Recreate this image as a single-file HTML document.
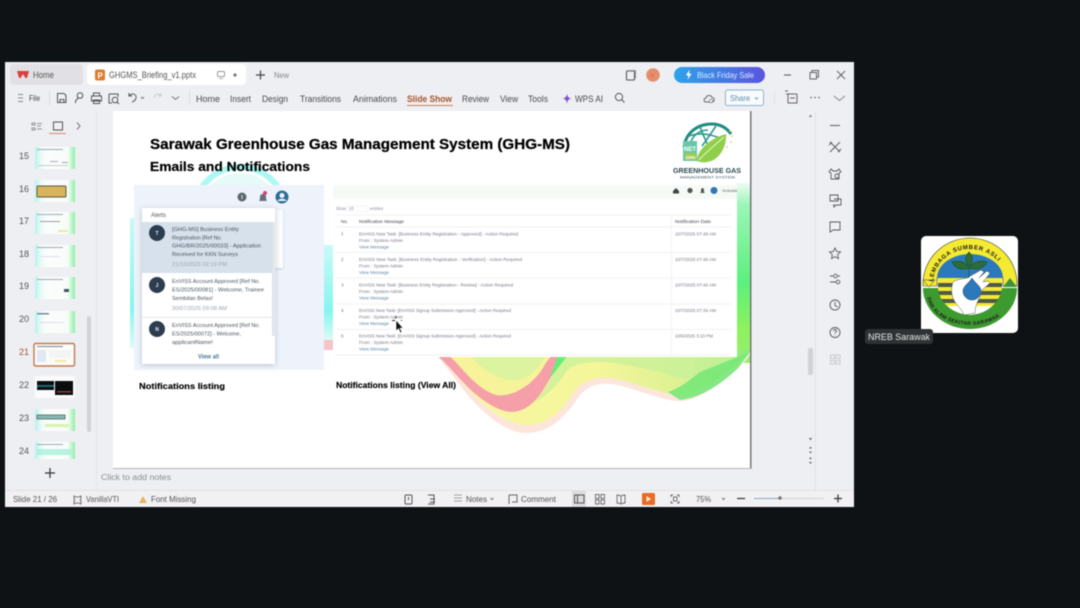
<!DOCTYPE html>
<html><head><meta charset="utf-8"><title>GHGMS Briefing</title>
<style>
html,body{margin:0;padding:0;width:1080px;height:608px;overflow:hidden;background:#0f1214}
svg{display:block;position:absolute;left:0;top:0;font-family:"Liberation Sans",sans-serif}
</style></head><body>
<svg width="1080" height="608" viewBox="0 0 1080 608" xmlns="http://www.w3.org/2000/svg">
<defs>
<linearGradient id="bf" x1="0" x2="1" y1="0" y2="0"><stop offset="0" stop-color="#2da3ea"/><stop offset="1" stop-color="#5b55de"/></linearGradient>
<linearGradient id="gr" x1="0" x2="0" y1="0" y2="1"><stop offset="0" stop-color="#eefcf3"/><stop offset=".12" stop-color="#9cf6b8"/><stop offset=".55" stop-color="#5cf07e"/><stop offset=".8" stop-color="#8cf25e"/><stop offset="1" stop-color="#9bee70"/></linearGradient>
<linearGradient id="cy" x1="0" x2="0" y1="0" y2="1"><stop offset="0" stop-color="#c8faf6"/><stop offset=".7" stop-color="#86f5ef"/><stop offset="1" stop-color="#e0fbf6"/></linearGradient>
<linearGradient id="sw" x1="0" x2="1" y1="0" y2="0"><stop offset="0" stop-color="#f9f6a6"/><stop offset=".5" stop-color="#f5f69a"/><stop offset=".8" stop-color="#d9f193"/><stop offset="1" stop-color="#7ced76"/></linearGradient>
<linearGradient id="th" x1="0" x2="1" y1="0" y2="0"><stop offset="0" stop-color="#b4f2ee"/><stop offset=".16" stop-color="#eefaf8"/><stop offset=".3" stop-color="#fbfdfc"/><stop offset=".82" stop-color="#f8fcf8"/><stop offset="1" stop-color="#8ef0a6"/></linearGradient>
<path id="arcT" d="M933 284A37 35 0 0 1 1007 284"/>
<path id="arcB" d="M927 294A43 31 0 0 0 1013 294"/>
<clipPath id="sc"><rect x="113" y="111" width="637" height="357"/></clipPath>
<clipPath id="nc"><rect x="921" y="236" width="97" height="97" rx="5"/></clipPath>
</defs>
<g style="filter:blur(.5px)">
<!-- window -->
<rect x="5" y="62" width="849" height="445" fill="#eeeff3"/>
<rect x="10" y="64" width="73" height="21" rx="4" fill="#e1e1e5"/>
<rect x="87" y="64" width="159" height="21" rx="4" fill="#fff"/>
<path d="M17 71h12l-2 7h-1.600l-2.400-4-2.400 4H19z" fill="#d8413c"/>
<text x="33" y="78" font-size="9" fill="#555" textLength="21" lengthAdjust="spacingAndGlyphs">Home</text>
<rect x="95" y="69.500" width="10" height="11" rx="2" fill="#e07b2e"/><text x="97.500" y="78.500" font-size="8" fill="#fff" font-weight="bold">P</text>
<text x="109" y="78" font-size="9" fill="#555" textLength="87" lengthAdjust="spacingAndGlyphs">GHGMS_Briefing_v1.pptx</text>
<rect x="217.500" y="71.500" width="7" height="5" rx="1" fill="none" stroke="#999"/><path d="M219 78.500h4" stroke="#aaa"/>
<circle cx="235" cy="75" r="1.600" fill="#777"/>
<path d="M256 75h9M260.500 70.500v9" stroke="#444" stroke-width="1.200"/>
<text x="274" y="78" font-size="8" fill="#888" textLength="15" lengthAdjust="spacingAndGlyphs">New</text>
<!-- top right -->
<rect x="626.500" y="71" width="8" height="9" rx="1" fill="none" stroke="#555" stroke-width="1.100"/><path d="M628 70.500h7.500v8" fill="none" stroke="#999"/>
<circle cx="653" cy="75" r="6.800" fill="#e58f6a"/><text x="650" y="77.500" font-size="6" fill="#d8704c">N</text>
<rect x="674" y="67" width="91" height="16" rx="8" fill="url(#bf)"/>
<path d="M689.500 69.500l-3.500 6h2.500l-1 4.500 4-6.200h-2.500z" fill="#fff"/>
<text x="697" y="78" font-size="8.500" fill="#d8ecff" textLength="57" lengthAdjust="spacingAndGlyphs">Black Friday Sale</text>
<path d="M784 75h7" stroke="#555"/>
<rect x="810" y="72.500" width="6.500" height="6.500" fill="none" stroke="#666"/><path d="M812 72.500v-2h6.500v6.500h-2" fill="none" stroke="#666"/>
<path d="M837 71l8 8M845 71l-8 8" stroke="#666"/>
<!-- quick toolbar -->
<path d="M18 94.500h5M18 98h5M18 101.500h5" stroke="#888"/>
<text x="29" y="101" font-size="8.500" fill="#444" textLength="11" lengthAdjust="spacingAndGlyphs">File</text>
<path d="M49.500 91v14" stroke="#ddd"/>
<path d="M57.500 93.500h6.500l2 2v7h-8.500zM60 102.500v-3h4v3" fill="none" stroke="#555"/>
<circle cx="80" cy="95.500" r="2.800" fill="none" stroke="#555"/><path d="M78 98l-2.500 3v2" fill="none" stroke="#555"/>
<path d="M93.500 96v-3h6v3M91.500 96h10v5h-10zM93.500 100h6v3.500h-6z" fill="none" stroke="#555"/>
<path d="M109 94h9v3M109 94v9h3" fill="none" stroke="#555"/><circle cx="115" cy="100" r="2.800" fill="none" stroke="#555"/><path d="M117 102l2 2" stroke="#555"/>
<path d="M129 96c3-3.500 8-2 7 2-.5 2-2 3.500-4 4M129 93v3h3" fill="none" stroke="#555"/><path d="M141 97l1.500 1.500L144 97" fill="none" stroke="#777"/>
<path d="M161 96c-3-3.500-7-2-6.500 2M161 93v3h-3" fill="none" stroke="#ccc"/>
<path d="M172 96.500l3.500 3 3.500-3" fill="none" stroke="#777"/>
<path d="M189.500 91v14" stroke="#ddd"/>
<!-- menu -->
<g font-size="9" fill="#4a4a4a">
<text x="196" y="102" textLength="24" lengthAdjust="spacingAndGlyphs">Home</text>
<text x="230" y="102" textLength="21" lengthAdjust="spacingAndGlyphs">Insert</text>
<text x="262" y="102" textLength="26" lengthAdjust="spacingAndGlyphs">Design</text>
<text x="300" y="102" textLength="41" lengthAdjust="spacingAndGlyphs">Transitions</text>
<text x="353" y="102" textLength="44" lengthAdjust="spacingAndGlyphs">Animations</text>
<text x="407" y="102" textLength="45" lengthAdjust="spacingAndGlyphs" fill="#a4562a" font-weight="bold">Slide Show</text>
<text x="462" y="102" textLength="27" lengthAdjust="spacingAndGlyphs">Review</text>
<text x="500" y="102" textLength="18" lengthAdjust="spacingAndGlyphs">View</text>
<text x="528" y="102" textLength="20" lengthAdjust="spacingAndGlyphs">Tools</text>
<text x="575" y="102" textLength="28" lengthAdjust="spacingAndGlyphs">WPS AI</text>
</g>
<rect x="407" y="105" width="46" height="1" fill="#c9825a"/>
<path d="M562.500 98.500c3-.5 4-1.500 4.500-5 .5 3.500 1.500 4.500 4.500 5-3 .5-4 1.500-4.500 5.500-.5-4-1.500-5-4.500-5.500z" fill="#7a4fd0"/>
<circle cx="619" cy="97" r="3.600" fill="none" stroke="#555"/><path d="M621.500 99.500l3 3" stroke="#555"/>
<path d="M706 102h6c3 0 3-4.500 0-4.500-1-3-5.500-2.500-6 .5-2.500.5-2.500 4 0 4z" fill="none" stroke="#666"/><circle cx="711" cy="101" r="1.800" fill="#eeeff3" stroke="#666" stroke-width=".7"/>
<rect x="725.500" y="90" width="38" height="15.500" rx="2" fill="#f8fafc" stroke="#8db4cc"/>
<text x="730" y="101" font-size="8.500" fill="#5c8cab" textLength="20" lengthAdjust="spacingAndGlyphs">Share</text><path d="M755 97.500l1.500 1.500 1.500-1.500" fill="none" stroke="#7aa"/>
<path d="M774.500 91v14" stroke="#e2e2e5"/>
<path d="M786 94h11M788 94v9h9v-9M790 98h5M785 91h3" fill="none" stroke="#666"/>
<circle cx="811" cy="97.500" r=".8" fill="#555"/><circle cx="815" cy="97.500" r=".8" fill="#555"/><circle cx="819" cy="97.500" r=".8" fill="#555"/>
<path d="M834 96l5.500 4.500L845 96" fill="none" stroke="#888"/>
<!-- left rail -->
<path d="M32 123h3v2h-3zM32 128h3v2h-3zM37 123.500h5M37 126h4M37 129h5" fill="none" stroke="#777" stroke-width=".8"/>
<rect x="53.500" y="122" width="9" height="8" fill="none" stroke="#555"/><rect x="49" y="133" width="17" height="1" fill="#d08a66"/>
<path d="M77 122.500l3 3.500-3 3.500" fill="none" stroke="#777"/>
<path d="M96.500 111v380" stroke="#e6e6ea"/>
<!-- thumbnails -->
<g font-size="9" fill="#555" text-anchor="middle">
<text x="24" y="159">15</text><text x="24" y="192">16</text><text x="24" y="224">17</text><text x="24" y="257">18</text><text x="24" y="289">19</text><text x="24" y="322">20</text><text x="24" y="355" fill="#a4562a">21</text><text x="24" y="388">22</text><text x="24" y="421">23</text><text x="24" y="454">24</text>
</g>
<g>
<rect x="35" y="147" width="40" height="22" fill="url(#th)"/><rect x="37" y="149" width="26" height="1" fill="#9ab"/><rect x="38" y="165" width="30" height="1" fill="#ccc"/><rect x="50" y="161" width="8" height="1" fill="#aab"/><rect x="62" y="162" width="6" height="1" fill="#9ab"/>
<rect x="35" y="180" width="40" height="22" fill="url(#th)"/><rect x="37" y="186" width="29" height="11" rx="1" fill="#d8b45a" stroke="#5c5a45"/>
<rect x="35" y="212" width="40" height="22" fill="url(#th)"/><rect x="37" y="214" width="26" height="1" fill="#9ab"/><rect x="40" y="221" width="20" height="1" fill="#99a"/><rect x="58" y="230" width="10" height="2" fill="#e8ec9c"/>
<rect x="35" y="245" width="40" height="22" fill="url(#th)"/><rect x="37" y="247" width="26" height="1" fill="#9ab"/><rect x="40" y="256" width="20" height="1" fill="#dde"/>
<rect x="35" y="277" width="40" height="22" fill="url(#th)"/><rect x="37" y="279" width="26" height="1" fill="#9ab"/><rect x="64" y="289" width="5" height="3" fill="#456"/>
<rect x="35" y="311" width="40" height="22" fill="url(#th)"/><rect x="37" y="313" width="12" height="1.500" fill="#789"/><rect x="40" y="322" width="24" height="1" fill="#dde"/>
<rect x="34" y="343.500" width="40.500" height="22.500" rx="1.500" fill="#fbfbf8" stroke="#c07a50" stroke-width="1.400"/><rect x="37" y="346" width="26" height="1" fill="#789"/><rect x="37" y="350" width="9" height="12" fill="#dfe8f4"/><rect x="49" y="350" width="22" height="8" fill="#f4f4f4"/><rect x="55" y="360" width="11" height="2" fill="#f2e9a0"/>
<rect x="35" y="376" width="40" height="22" fill="#fbfbfb"/><rect x="37" y="381" width="17" height="9" fill="#0a0d10"/><rect x="55" y="381" width="18" height="14" fill="#0a0d10"/><rect x="37" y="385" width="17" height="2" fill="#1d6a70"/><rect x="57" y="391" width="14" height="1.500" fill="#8c3a3a"/>
<rect x="35" y="409" width="40" height="22" fill="url(#th)"/><rect x="37" y="415" width="28" height="4" fill="#8ab8b0" stroke="#4a6a66" stroke-width=".8"/><rect x="45" y="424" width="24" height="3" fill="#d8f2b0"/>
<rect x="35" y="442" width="40" height="17" fill="url(#th)"/><rect x="37" y="444" width="26" height="1" fill="#9ab"/><rect x="37" y="449" width="34" height="6" fill="#9cf0d8" opacity=".7"/>
</g>
<rect x="87" y="316" width="4" height="116" rx="2" fill="#d2d2d6"/>
<path d="M45 473h10M50 468v10" stroke="#333" stroke-width="1.200"/>
<!-- slide -->
<rect x="113" y="111" width="637" height="357" fill="#fff"/>
<g clip-path="url(#sc)">
<!-- swirl -->
<circle cx="240" cy="213" r="46" fill="none" stroke="#a4f7f1" stroke-width="6" opacity=".9"/>
<circle cx="240" cy="213" r="40" fill="#e6faf8"/>
<rect x="130" y="218" width="6" height="130" fill="url(#cy)"/>
<rect x="322" y="245" width="13" height="95" fill="url(#cy)"/>
<rect x="324" y="340" width="10" height="10" fill="#f7c2c8"/>
<rect x="736" y="183" width="15" height="180" fill="url(#gr)"/>
<path d="M436 355C452 372 462 392 482 410C498 425 514 434 528 433C552 432 566 415 578 398C590 382 604 382 622 386C644 392 664 401 680 401C698 401 716 386 734 372C742 366 748 358 752 352L752 350H436z" fill="#fce6dc"/>
<path d="M440 355C456 372 468 392 486 406C500 418 516 426 530 425C552 423 564 408 574 392C586 376 604 376 622 380C644 386 664 394 680 395C694 394 712 384 732 368L752 350H440z" fill="url(#sw)"/>
<path d="M437 355C450 367 462 382 472 391C484 402 500 412 512 412C530 411 540 396 548 382C552 376 556 366 559 355z" fill="#f59fa8"/>
<path d="M448 355C462 366 474 388 496 395C516 398 536 380 543 368C546 362 550 358 552 355z" fill="#f6f39a"/>
<path d="M470 355C482 370 500 382 518 380C530 378 540 366 546 355z" fill="#dcf3a0"/>
<path d="M559 355C556 370 548 388 534 402C548 396 560 382 566 372C572 364 586 362 605 362C640 366 660 372 680 378C700 382 720 374 738 355z" fill="#c8f09a" opacity=".75"/>
<path d="M558 355L550 378L558 368L568 355z" fill="#66ee78"/>
<path d="M680 400C700 398 722 384 738 368L750 352L700 372C690 380 680 388 668 392z" fill="#78e878" opacity=".9"/>
<!-- panels -->
<rect x="134" y="185" width="190" height="185" fill="#eef3fb"/>
<rect x="333" y="185" width="404" height="172" fill="#fff"/>
<rect x="333" y="185" width="404" height="14" fill="#f5faf7"/>
</g>
<!-- titles -->
<text x="150" y="149" font-size="14.500" font-weight="bold" fill="#000" textLength="420" lengthAdjust="spacingAndGlyphs" stroke="#000" stroke-width=".25">Sarawak Greenhouse Gas Management System (GHG-MS)</text>
<text x="150" y="171" font-size="12.500" font-weight="bold" fill="#000" textLength="160" lengthAdjust="spacingAndGlyphs" stroke="#000" stroke-width=".2">Emails and Notifications</text>
<text x="139" y="389" font-size="8.500" font-weight="bold" fill="#000" textLength="86" lengthAdjust="spacingAndGlyphs" stroke="#000" stroke-width=".15">Notifications listing</text>
<text x="336" y="388" font-size="8.500" font-weight="bold" fill="#000" textLength="120" lengthAdjust="spacingAndGlyphs" stroke="#000" stroke-width=".15">Notifications listing (View All)</text>
<!-- greenhouse logo -->
<path d="M684 147C686 132 698 124 712 124C720 124 727 128 731 134" fill="none" stroke="#1f8a83" stroke-width="3"/>
<path d="M690 145C692 135 700 130 708 130M700 126C702 134 706 140 708 146M716 126C712 132 708 138 702 146M689 136C700 132 712 134 724 140" fill="none" stroke="#2a9a90" stroke-width="1.600"/>
<path d="M697 161C697 148 714 137 726 134C727 148 718 161 707 162C703 163 700 162 697 161z" fill="#8fcf4a"/>
<path d="M699 160C706 152 714 146 724 137" stroke="#e8f6d0" fill="none"/>
<rect x="683" y="141" width="14" height="20" fill="#66c8a8"/><text x="684" y="151" font-size="6" font-weight="bold" fill="#fff">NET</text><rect x="685" y="153" width="11" height="7" fill="#a4c84a"/><text x="685.500" y="159" font-size="4.500" font-weight="bold" fill="#fff">2050</text>
<circle cx="730" cy="131" r=".9" fill="#d6c878"/><circle cx="732" cy="136" r=".9" fill="#d6c878"/><circle cx="731" cy="142" r=".9" fill="#d6c878"/><circle cx="727" cy="147" r=".9" fill="#d6c878"/>
<text x="673" y="173" font-size="7.500" font-weight="bold" fill="#2e4b50" textLength="68" lengthAdjust="spacingAndGlyphs">GREENHOUSE GAS</text>
<text x="680" y="178.500" font-size="4" fill="#456" textLength="55" lengthAdjust="spacingAndGlyphs">MANAGEMENT SYSTEM</text>
<!-- panel 1 -->
<circle cx="242" cy="197" r="4.500" fill="#5a6670"/><rect x="241.500" y="195" width="1" height="4" fill="#ddd"/>
<path d="M259 201c1-1 1-3 1-4 0-2 1-3 3-3s3 1 3 3c0 1 0 3 1 4z" fill="#65707c"/><circle cx="265" cy="193" r="2" fill="#d8436a"/>
<circle cx="282" cy="197" r="6.500" fill="#2f6f95"/><circle cx="282" cy="195.500" r="2.500" fill="#eef3fb"/><path d="M277.500 201c1-3 8-3 9 0" fill="#eef3fb"/>
<rect x="275" y="210" width="8" height="58" fill="#fbfcfe" style="filter:drop-shadow(0 1px 1px rgba(90,100,120,.25))"/>
<rect x="142" y="208" width="133" height="156" fill="#fff" style="filter:drop-shadow(0 1px 3px rgba(90,100,120,.35))"/>
<text x="151" y="217" font-size="6" fill="#556" textLength="15" lengthAdjust="spacingAndGlyphs">Alerts</text>
<rect x="142" y="222" width="130" height="51" fill="#d6e1ec"/>
<rect x="272" y="222" width="2.500" height="114" fill="#dfe4ea"/>
<circle cx="157" cy="233" r="8" fill="#2c3d50"/><circle cx="157" cy="285" r="8" fill="#2c3d50"/><circle cx="157" cy="329" r="8" fill="#2c3d50"/>
<g font-size="5" fill="#eef" font-weight="bold" text-anchor="middle"><text x="157" y="235">T</text><text x="157" y="287">J</text><text x="157" y="331">N</text></g>
<g font-size="5.600" fill="#4a5562">
<text x="172" y="231" textLength="67" lengthAdjust="spacingAndGlyphs">[GHG-MS] Business Entity</text>
<text x="172" y="239.500" textLength="50" lengthAdjust="spacingAndGlyphs">Registration [Ref No.</text>
<text x="172" y="247.500" textLength="89" lengthAdjust="spacingAndGlyphs">GHG/BR/2025/00033] - Application</text>
<text x="172" y="256" textLength="66" lengthAdjust="spacingAndGlyphs">Received for KKN Surveys</text>
<text x="172" y="266" textLength="55" lengthAdjust="spacingAndGlyphs" fill="#9aa6b2">21/10/2025 02:19 PM</text>
<text x="172" y="283" textLength="88" lengthAdjust="spacingAndGlyphs">EnVISS Account Approved [Ref No.</text>
<text x="172" y="291.500" textLength="92" lengthAdjust="spacingAndGlyphs">ES/2025/00081] - Welcome, Trainee</text>
<text x="172" y="300" textLength="41" lengthAdjust="spacingAndGlyphs">Sembilan Belas!</text>
<text x="172" y="310" textLength="55" lengthAdjust="spacingAndGlyphs" fill="#9aa6b2">30/07/2025 09:08 AM</text>
<text x="172" y="327" textLength="88" lengthAdjust="spacingAndGlyphs">EnVISS Account Approved [Ref No.</text>
<text x="172" y="335.500" textLength="69" lengthAdjust="spacingAndGlyphs">ES/2025/00072] - Welcome,</text>
<text x="172" y="344" textLength="41" lengthAdjust="spacingAndGlyphs">applicantName!</text>
</g>
<rect x="142" y="317" width="130" height=".7" fill="#ddd"/>
<rect x="142" y="348" width="133" height="16" fill="#fff"/>
<text x="198" y="358.500" font-size="6.500" fill="#4c7a96" font-weight="bold" textLength="21" lengthAdjust="spacingAndGlyphs">View all</text>
<!-- panel 2 -->
<path d="M673 191l3-3 3 3v2.500h-6z" fill="#444"/>
<circle cx="690" cy="190.500" r="2.600" fill="#555"/><path d="M700 193l1-1v-2c0-1.500 1-2 1.500-2s1.500.5 1.500 2v2l1 1z" fill="#555"/>
<circle cx="714" cy="190.500" r="3.500" fill="#2f79b0"/><text x="722" y="192" font-size="4" fill="#666" textLength="15" lengthAdjust="spacingAndGlyphs">SHAHAB</text>
<g font-size="4.200" fill="#889"><text x="336" y="210" textLength="10" lengthAdjust="spacingAndGlyphs">Show</text><text x="349" y="210">10</text><text x="370" y="210" textLength="13" lengthAdjust="spacingAndGlyphs">entries</text></g>
<rect x="347" y="206" width="21" height="5.500" fill="none" stroke="#eee" stroke-width=".6"/>
<g stroke="#eceef1" stroke-width=".7">
<path d="M336 215H731M336 227H731M336 252.500H731M336 278H731M336 304H731M336 329.500H731M336 355H731M671.500 215V355"/>
</g>
<g font-size="4.800" fill="#445"><text x="341" y="223" textLength="7" lengthAdjust="spacingAndGlyphs">No.</text><text x="359" y="223" textLength="45" lengthAdjust="spacingAndGlyphs">Notification Message</text><text x="675" y="223" textLength="36" lengthAdjust="spacingAndGlyphs">Notification Date</text></g>
<g font-size="4.700" fill="#778"><text x="341" y="235">1</text><text x="341" y="261">2</text><text x="341" y="286.500">3</text><text x="341" y="312">4</text><text x="341" y="337.500">5</text>
<text x="359" y="235.500" textLength="159" lengthAdjust="spacingAndGlyphs">EnVISS New Task: [Business Entity Registration - Approved] - Action Required</text>
<text x="359" y="242" textLength="44" lengthAdjust="spacingAndGlyphs">From : System Admin</text>
<text x="359" y="261" textLength="163" lengthAdjust="spacingAndGlyphs">EnVISS New Task: [Business Entity Registration - Verification] - Action Required</text>
<text x="359" y="267.500" textLength="44" lengthAdjust="spacingAndGlyphs">From : System Admin</text>
<text x="359" y="286.500" textLength="154" lengthAdjust="spacingAndGlyphs">EnVISS New Task: [Business Entity Registration - Review] - Action Required</text>
<text x="359" y="293" textLength="44" lengthAdjust="spacingAndGlyphs">From : System Admin</text>
<text x="359" y="312" textLength="152" lengthAdjust="spacingAndGlyphs">EnVISS New Task: [EnVISS Signup Submission Approved] - Action Required</text>
<text x="359" y="318.500" textLength="44" lengthAdjust="spacingAndGlyphs">From : System Admin</text>
<text x="359" y="337.500" textLength="152" lengthAdjust="spacingAndGlyphs">EnVISS New Task: [EnVISS Signup Submission Approved] - Action Required</text>
<text x="359" y="344" textLength="44" lengthAdjust="spacingAndGlyphs">From : System Admin</text>
<text x="675" y="235.500" textLength="41" lengthAdjust="spacingAndGlyphs">10/7/2025 07:49 AM</text>
<text x="675" y="261" textLength="41" lengthAdjust="spacingAndGlyphs">10/7/2025 07:48 AM</text>
<text x="675" y="286.500" textLength="41" lengthAdjust="spacingAndGlyphs">10/7/2025 07:46 AM</text>
<text x="675" y="312" textLength="41" lengthAdjust="spacingAndGlyphs">10/7/2025 07:34 AM</text>
<text x="675" y="337.500" textLength="38" lengthAdjust="spacingAndGlyphs">10/6/2025 3:10 PM</text>
</g>
<g font-size="4.700" fill="#5e8aa5"><text x="359" y="248.500" textLength="30" lengthAdjust="spacingAndGlyphs">View Message</text><text x="359" y="274" textLength="30" lengthAdjust="spacingAndGlyphs">View Message</text><text x="359" y="299.500" textLength="30" lengthAdjust="spacingAndGlyphs">View Message</text><text x="359" y="325" textLength="30" lengthAdjust="spacingAndGlyphs">View Message</text><text x="359" y="350.500" textLength="30" lengthAdjust="spacingAndGlyphs">View Message</text></g>
<!-- cursor -->
<path d="M396 320v11l2.500-2.200 2 4.200 1.500-.8-2-4h3.200z" fill="#111" stroke="#fff" stroke-width=".6"/>
<path d="M392 320.500h3M402 320.500h-1M396 316.500v2" stroke="#222"/>
<!-- slide shadow -->
<rect x="750" y="111" width="1.500" height="358" fill="#777"/>
<rect x="113" y="468" width="639" height="1" fill="#b4b4b6"/>
<!-- right side -->
<path d="M815.500 111v380" stroke="#e2e2e6"/>
<path d="M809 117l1.500-2.500 1.500 2.500z" fill="#777"/>
<rect x="808" y="348" width="5" height="27" rx="2" fill="#d2d2d6"/>
<path d="M809 438l1.500 2.500 1.500-2.500zM809 448.500l1.500-2 1.500 2zM809 451.500l1.500 2 1.500-2zM809 459l1.500-2 1.500 2zM809 462l1.500 2 1.500-2z" fill="#666"/>
<g fill="none" stroke="#5a5a5e" stroke-width=".9">
<path d="M830 125.500h10" stroke-width="1"/>
<path d="M830 142l10 10M840 142l-10 10M829 145l3-3M838 152l3-3"/>
<path d="M831 169l2 2h4l2-2 2 3-2 1v6h-8v-6l-2-1z"/><circle cx="837" cy="176" r="2"/>
<path d="M830 195h8v6h-8zM834 199h7v6h-5l-2 2v-2h-1"/>
<path d="M830 222h10v8h-7l-3 2z"/>
<path d="M835 248l1.700 3.500 3.800.5-2.800 2.600.7 3.900-3.400-1.900-3.400 1.900.7-3.900-2.800-2.600 3.800-.5z"/>
<path d="M830 276h3M838 276h2M830 282h6"/><circle cx="835.500" cy="276" r="1.800"/><circle cx="838" cy="282" r="1.800"/>
<circle cx="835" cy="305" r="5"/><path d="M835 302v3.500l2.500 1.500"/>
<circle cx="835" cy="332.500" r="5"/><path d="M833.500 331c0-2 3-2 3 0 0 1-1.500 1-1.500 2.500M835 335v.5"/>
<g stroke="#c6c6ca"><rect x="830.500" y="355" width="4" height="3.500"/><rect x="836" y="355" width="4" height="3.500"/><rect x="830.500" y="360.500" width="4" height="3.500"/><rect x="836" y="360.500" width="4" height="3.500"/></g>
</g>
<!-- notes / status -->
<text x="101" y="480" font-size="8.500" fill="#8c8c90" textLength="70" lengthAdjust="spacingAndGlyphs">Click to add notes</text>
<rect x="5" y="491" width="849" height="16" fill="#f1f1f4"/><path d="M5 490.500h849" stroke="#e2e2e6"/>
<g font-size="8.500" fill="#555">
<text x="13" y="502" textLength="44" lengthAdjust="spacingAndGlyphs">Slide 21 / 26</text>
<text x="86" y="502" textLength="33" lengthAdjust="spacingAndGlyphs">VanillaVTI</text>
<text x="151" y="502" textLength="45" lengthAdjust="spacingAndGlyphs">Font Missing</text>
<text x="466" y="502" textLength="21" lengthAdjust="spacingAndGlyphs">Notes</text>
<text x="521" y="502" textLength="35" lengthAdjust="spacingAndGlyphs">Comment</text>
<text x="696" y="502" textLength="15" lengthAdjust="spacingAndGlyphs">75%</text>
</g>
<path d="M74 496l2 1h3l2-1v3l-1 1 1 1v3l-2-1h-3l-2 1v-3l1-1-1-1z" fill="none" stroke="#555" stroke-width=".8"/>
<path d="M139 503l4-7 4 7z" fill="#e6b45c"/>
<rect x="405" y="495" width="7" height="9" rx="1" fill="none" stroke="#555"/><path d="M408.500 497v3" stroke="#555"/>
<path d="M428 495h6v9h-6M430 499h5M430 502h5" fill="none" stroke="#555"/>
<path d="M454 495h8M454 498h8M454 501h8" stroke="#888" stroke-width=".8"/><path d="M490.500 498l1.500 1.500 1.500-1.500" fill="none" stroke="#777"/>
<path d="M509 495h8v7h-5M509 495v9" fill="none" stroke="#666"/>
<rect x="572" y="491" width="14" height="16" fill="#dcdcde"/>
<rect x="574.500" y="495" width="9.500" height="8" fill="none" stroke="#555"/><path d="M577.500 495v8" stroke="#555"/>
<g fill="none" stroke="#666" stroke-width=".9"><rect x="595.500" y="494.500" width="3.500" height="4"/><rect x="601" y="494.500" width="3.500" height="4"/><rect x="595.500" y="500" width="3.500" height="4"/><rect x="601" y="500" width="3.500" height="4"/>
<path d="M621 496c-2-1-3-1-4-1v8c1 0 2 0 4 1 2-1 3-1 4-1v-8c-1 0-2 0-4 1v8"/>
<path d="M671 497v-2h2M677 495h2v2M679 501v2h-2M673 503h-2v-2"/><rect x="673.500" y="497" width="3.500" height="4"/></g>
<rect x="642" y="493" width="13" height="12" rx="1.500" fill="#e86a28"/><path d="M646.500 496v6l4.500-3z" fill="#fff2c8"/>
<path d="M722 498l1.500 1.500 1.500-1.500" fill="none" stroke="#777"/>
<path d="M737 498.500h8" stroke="#333" stroke-width="1.200"/>
<path d="M754 498.500h70" stroke="#d2d2d4"/><path d="M754 498.500h26" stroke="#8ca8bc"/><circle cx="780" cy="498" r="1.800" fill="#777"/>
<path d="M834 498.500h8M838 494.500v8" stroke="#333" stroke-width="1.200"/>
<!-- NREB logo -->
<rect x="921" y="236" width="97" height="97" rx="5" fill="#fff"/>
<g clip-path="url(#nc)">
<path d="M923 284A47 46 0 0 1 1017 284L1017 286H1003L1003 278H937L937 286H923z" fill="#f5ea32" stroke="#333" stroke-width=".6"/>
<path d="M937 278A33 24 0 0 1 1003 278z" fill="#2b79bb"/>
<path d="M923 280h12l-6 7z" fill="#f5ea32" stroke="#333" stroke-width=".5"/>
<path d="M1003 287l7-9 7 9z" fill="#3b9140"/>
<rect x="938" y="278" width="64" height="28" fill="#f5ea32"/>
<path d="M938 283h64v4h-64zM938 291h64v4h-64zM938 299h64v4h-64z" fill="#4d5a48"/>
<path d="M923 288H938C939 302 952 314 970 315C988 314 1000 302 1002 288H1017C1017 310 996 329 970 329C944 329 923 310 923 288z" fill="#3d9a2f"/>
<path d="M953 282c4-3 11-3 14-4l14-8 3 2-5 6 8-7 3 2-7 9 5-1 2 2-8 7c-1 8-7 12-7 23l-11 2c-3-8-11-12-12-21-1-4 0-9 1-12z" fill="#fff" stroke="#333" stroke-width=".4"/>
<path d="M972 278c3 5 9 8 9 13a9 9 0 0 1-18 0c0-5 6-8 9-13z" fill="#2b79bb" stroke="#123" stroke-width=".4"/>
<path d="M969 278v-10M969 268c-8 3-14 0-17-6 7-2 14 0 17 6zM969 268c8 3 15 0 18-6-7-2-15 0-18 6zM969 266c-5-5-4-10 0-14 4 4 5 9 0 14z" fill="#2d6d35" stroke="#1e5226" stroke-width=".7"/>
<text font-size="6" font-weight="bold" fill="#1c1c1c" letter-spacing=".7"><textPath href="#arcT" startOffset="2%">LEMBAGA SUMBER ASLI</textPath></text>
<text font-size="5.200" font-weight="bold" fill="#1c1c1c" letter-spacing=".3"><textPath href="#arcB" startOffset="3%">DAN ALAM SEKITAR SARAWAK</textPath></text>
</g>
<rect x="865" y="329" width="68" height="15" rx="3" fill="#2f3234"/>
<text x="868" y="340" font-size="9.500" fill="#e6e6e6" textLength="62" lengthAdjust="spacingAndGlyphs">NREB Sarawak</text>
</g>
</svg>
</body></html>
